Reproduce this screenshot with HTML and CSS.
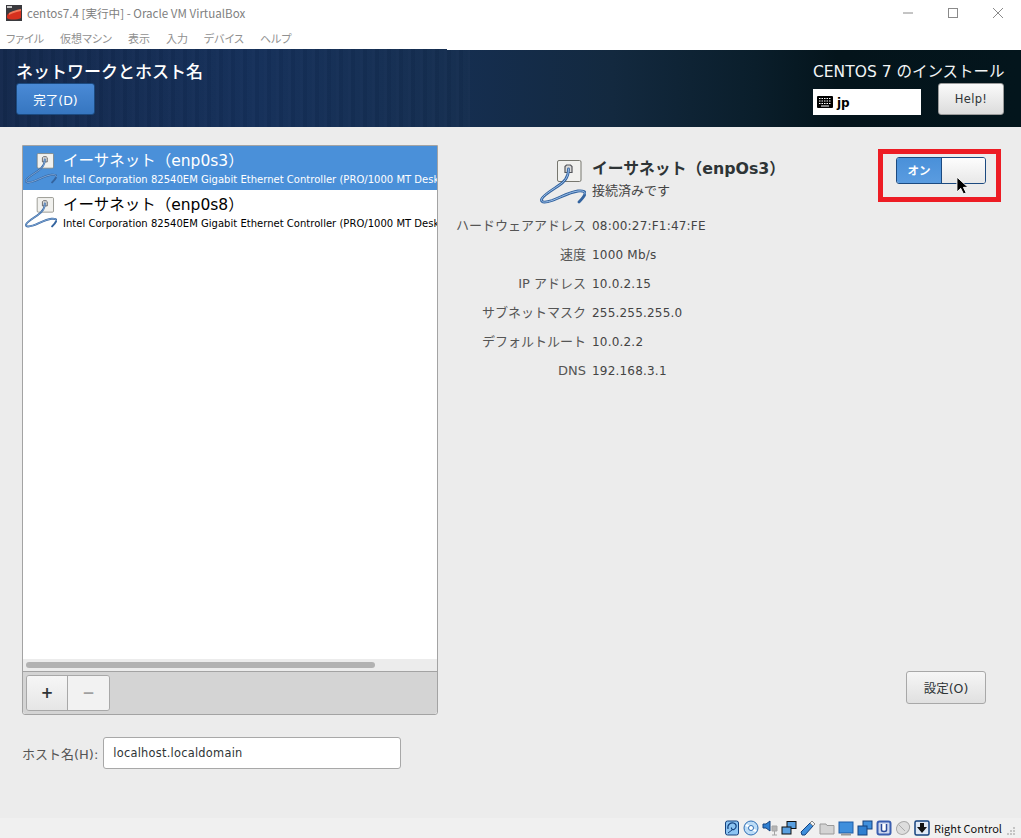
FILE: index.html
```html
<!DOCTYPE html>
<html lang="ja">
<head>
<meta charset="utf-8">
<title>centos7.4 [実行中] - Oracle VM VirtualBox</title>
<link rel="stylesheet" href="styles.css">
</head>
<body>
<svg class="defs" width="0" height="0" aria-hidden="true">
  <defs>
    <symbol id="nic" viewBox="0 0 46 44">
      <rect x="17.500" y="0.500" width="23.500" height="21" rx="1.500" fill="#f1f1ee" stroke="#77776f"/>
      <path d="M25 12.500V6.500L26.500 5H30.500L32 6.500V12.500Z" fill="#dcdcda" stroke="#55565a" stroke-width="1.200"/>
      <path d="M28.500 9C28.500 18 24 22 18 26C12 30 2 36 1.500 39.500C1 43 6 42.500 12 40.500C20 37.500 30 32 38 31C44 30.500 45.500 32 45 34C44 37 41 40 39 42" fill="none" stroke="#34649f" stroke-width="2.800" stroke-linecap="round"/>
      <path d="M28.500 9C28.500 18 24 22 18 26C12 30 2 36 1.500 39.500C1 43 6 42.500 12 40.500C20 37.500 30 32 38 31C44 30.500 45.500 32 45 34" fill="none" stroke="#9dc0ea" stroke-width="1" stroke-linecap="round"/>
    </symbol>
  </defs>
</svg>
<div class="titlebar">
  <svg class="appicon" viewBox="0 0 16 16"><rect width="16" height="16" fill="#3a3a3e"/><rect x="1" y="1" width="5" height="2" fill="#c8c8c8"/><path d="M1 11C1 8 7 6 12 6L15 5V13C11 15 3 15 1 13Z" fill="#d6301e"/><path d="M3 8C6 6 10 5 15 4V6C10 7 6 8 3 10Z" fill="#f0785a"/></svg>
  <span class="wintitle">centos7.4 [実行中] - Oracle VM VirtualBox</span>
  <div class="winctrls">
    <svg class="winbtn" viewBox="0 0 12 12"><path d="M1 6H11" stroke="#8a8a8a" fill="none"/></svg>
    <svg class="winbtn" viewBox="0 0 12 12"><rect x="1.500" y="1.500" width="9" height="9" stroke="#8a8a8a" fill="none"/></svg>
    <svg class="winbtn" viewBox="0 0 12 12"><path d="M1 1L11 11M11 1L1 11" stroke="#8a8a8a" fill="none"/></svg>
  </div>
</div>
<nav class="menubar">
  <span>ファイル</span><span>仮想マシン</span><span>表示</span><span>入力</span><span>デバイス</span><span>ヘルプ</span>
</nav>
<header class="header">
  <div class="header-left">
    <h1 class="spoke-title">ネットワークとホスト名</h1>
    <button class="done-btn">完了(D)</button>
  </div>
  <div class="header-right">
    <div class="distro">CENTOS 7 のインストール</div>
    <div class="header-tools">
      <div class="kbd">
        <svg class="kbd-icon" viewBox="0 0 16 12"><rect width="16" height="12" rx="1" fill="#000"/><path d="M2 2.500H14M2 5H14M2 7.500H14" stroke="#fff" stroke-dasharray="1.500 1"/><path d="M4 10H12" stroke="#fff"/></svg>
        <span>jp</span>
      </div>
      <button class="help-btn">Help!</button>
    </div>
  </div>
</header>
<main class="main">
  <section class="left">
    <div class="listbox">
      <div class="devices">
        <div class="device selected">
          <svg class="device-icon"><use href="#nic"/></svg>
          <div class="device-text">
            <div class="device-name">イーサネット（enp0s3）</div>
            <div class="device-desc">Intel Corporation 82540EM Gigabit Ethernet Controller (PRO/1000 MT Desk</div>
          </div>
        </div>
        <div class="device">
          <svg class="device-icon"><use href="#nic"/></svg>
          <div class="device-text">
            <div class="device-name">イーサネット（enp0s8）</div>
            <div class="device-desc">Intel Corporation 82540EM Gigabit Ethernet Controller (PRO/1000 MT Desk</div>
          </div>
        </div>
      </div>
      <div class="scrollbar"><div class="thumb"></div></div>
      <div class="toolbar">
        <div class="btn-group">
          <button class="tool plus">+</button>
          <button class="tool minus">−</button>
        </div>
      </div>
    </div>
    <div class="hostrow">
      <label class="hostlabel">ホスト名(H):</label>
      <div class="hostinput">localhost.localdomain</div>
    </div>
  </section>
  <section class="right">
    <div class="right-top">
      <div class="summary">
        <svg class="summary-icon"><use href="#nic"/></svg>
        <div>
          <div class="summary-name">イーサネット（enpOs3）</div>
          <div class="summary-status">接続済みです</div>
        </div>
      </div>
      <div class="toggle">
        <div class="toggle-on">オン</div>
        <div class="toggle-knob"></div>
      </div>
    </div>
    <dl class="details">
      <dt>ハードウェアアドレス</dt><dd>08:00:27:F1:47:FE</dd>
      <dt>速度</dt><dd>1000 Mb/s</dd>
      <dt>IP アドレス</dt><dd>10.0.2.15</dd>
      <dt>サブネットマスク</dt><dd>255.255.255.0</dd>
      <dt>デフォルトルート</dt><dd>10.0.2.2</dd>
      <dt>DNS</dt><dd>192.168.3.1</dd>
    </dl>
    <div class="right-bottom"><button class="config-btn">設定(O)</button></div>
  </section>
</main>
<footer class="statusbar">
  <svg class="st" viewBox="0 0 16 16"><rect x="1.500" y="1" width="13" height="14" rx="2" fill="#8cc4f2" stroke="#14427f"/><path d="M4 9C3 4 7 2.500 9.500 3C13 4 13 8 10 9.500C8.500 10 7 9 7.500 7.500" fill="none" stroke="#14427f" stroke-width="1.200"/><path d="M4 13L8 10" stroke="#14427f"/></svg>
  <svg class="st" viewBox="0 0 16 16"><circle cx="8" cy="8" r="7" fill="#bcdcf6" stroke="#2f6fb5"/><path d="M3 5L7 7M9 9L13 11" stroke="#fff" stroke-width="2"/><circle cx="8" cy="8" r="2.500" fill="#fff" stroke="#2f6fb5"/></svg>
  <svg class="st" viewBox="0 0 16 16"><path d="M1 4H4L8 1V11L4 8H1Z" fill="#2f7fd0" stroke="#14427f"/><path d="M10 6H15V11H10ZM12.500 11V15M10 15H15" fill="#b5b5b5" stroke="#a5a5a5"/></svg>
  <svg class="st" viewBox="0 0 16 16"><rect x="6" y="1.500" width="9" height="7" fill="#5aa0e0" stroke="#111"/><rect x="1" y="7" width="9" height="7" fill="#5aa0e0" stroke="#111"/></svg>
  <svg class="st" viewBox="0 0 16 16"><path d="M1 12L10 3L13 6L5 15H2Z" fill="#3f8fdc" stroke="#14427f"/><path d="M10 3L12 1L15 4L13 6Z" fill="#f2f2f2" stroke="#888"/></svg>
  <svg class="st" viewBox="0 0 16 16"><path d="M1 4H7L8 5.500H15V14H1Z" fill="#d4d4d4" stroke="#9a9a9a"/></svg>
  <svg class="st" viewBox="0 0 16 16"><rect x="1" y="2" width="14" height="11" fill="#3f8fdc" stroke="#1c5ca8"/><path d="M3 14.500H13" stroke="#999" stroke-width="2"/></svg>
  <svg class="st" viewBox="0 0 16 16"><rect x="6" y="1" width="9" height="8" fill="#3f8fdc" stroke="#14427f"/><rect x="1" y="6" width="9" height="9" fill="#2f7fd0" stroke="#14427f"/></svg>
  <svg class="st" viewBox="0 0 16 16"><rect x="1.500" y="1.500" width="13" height="13" rx="2" fill="#cfd8ee" stroke="#3b5fb0" stroke-width="2"/><path d="M5.500 4V10C5.500 12 10.500 12 10.500 10V4" fill="#fff" stroke="#2a4a9a" stroke-width="1.500"/></svg>
  <svg class="st" viewBox="0 0 16 16"><ellipse cx="8" cy="8" rx="7" ry="6" transform="rotate(-40 8 8)" fill="#ddd" stroke="#aaa"/><path d="M4 5L10 11" stroke="#aaa"/></svg>
  <svg class="st" viewBox="0 0 16 16"><rect x="1" y="1" width="14" height="14" rx="1.500" fill="#dfe8f5" stroke="#14427f" stroke-width="1.500"/><path d="M6 3H10V7H13L8 13L3 7H6Z" fill="#111"/></svg>
  <span class="hostkey">Right Control</span>
  <svg class="grip" viewBox="0 0 10 10"><path d="M7 1h2v2H7zM4 4h2v2H4zM7 4h2v2H7zM1 7h2v2H1zM4 7h2v2H4zM7 7h2v2H7z" fill="#c4c4c4"/></svg>
</footer>
<div class="annot"></div>
<svg class="cursor" viewBox="0 0 14 20"><path d="M1 1V17L5 13L8 19L11 18L8 12H13Z" fill="#000" stroke="#fff"/></svg>
</body>
</html>
```
FILE: styles.css
```css
* { box-sizing: border-box; }
html, body { height: 100%; }
body {
  margin: 0;
  height: 838px;
  overflow: hidden;
  display: flex;
  flex-direction: column;
  background: #ececec;
  color: #2e3436;
  font-family: "DejaVu Sans", "Noto Sans CJK JP", sans-serif;
  font-size: 13px;
}
button { font-family: inherit; padding: 0; }
.defs { position: absolute; }

.titlebar {
  height: 26px;
  flex: none;
  display: flex;
  align-items: center;
  background: #fff;
  padding-left: 6px;
  font-family: "Noto Sans CJK JP", sans-serif;
  color: #808080;
  font-size: 11.600px;
}
.appicon { width: 16px; height: 16px; margin-right: 5px; }
.wintitle { flex: 1; }
.winctrls { display: flex; gap: 33px; padding-right: 17px; }
.winbtn { width: 12px; height: 12px; display: block; }

.menubar {
  height: 23px;
  flex: none;
  background: #fff;
  display: flex;
  gap: 16px;
  align-items: center;
  padding: 1px 0 0 6px;
  font-family: "Noto Sans CJK JP", sans-serif;
  font-feature-settings: "palt";
  font-size: 11px;
  color: #909090;
}

.header {
  height: 78px;
  flex: none;
  position: relative;
  display: flex;
  justify-content: space-between;
  padding: 12px 17px 0 16px;
  color: #fff;
  background-color: #03151c;
  background-image:
    repeating-linear-gradient(90deg, rgba(255,255,255,.016) 0 3px, rgba(0,0,0,.035) 3px 7px, rgba(255,255,255,.008) 7px 12px),
    linear-gradient(90deg, #14294d 0%, #15305a 25%, #152e50 45%, #13293f 60%, #0a1e2b 74%, #04141b 82%, #03151c 100%);
  background-size: 470px 100%, 100% 100%;
  background-repeat: no-repeat;
}
.header::before {
  content: "";
  position: absolute;
  left: 447px;
  right: 0;
  top: 0;
  height: 1px;
  background: #fff;
}
.spoke-title { margin: 0; font-size: 17px; font-weight: 500; line-height: 22px; }
.done-btn {
  display: block;
  width: 79px;
  height: 32px;
  border: 1px solid #1c4a80;
  border-radius: 3px;
  color: #fff;
  font-size: 12.500px;
  background: linear-gradient(#4a8ad6, #3676c0);
}
.header-right { width: 191px; display: flex; flex-direction: column; }
.distro { font-size: 15.500px; line-height: 22px; text-align: right; color: #f2f4f5; white-space: nowrap; }
.header-tools { display: flex; justify-content: space-between; align-items: flex-start; }
.kbd {
  width: 108px;
  height: 26px;
  margin-top: 6px;
  background: #fff;
  color: #000;
  display: flex;
  align-items: center;
  padding-left: 4px;
  gap: 4px;
  font-weight: 700;
  font-size: 12px;
}
.kbd-icon { width: 16px; height: 12px; }
.kbd span { padding-top: 2px; }
.help-btn {
  width: 66px;
  height: 32px;
  border: 1px solid #9b9b9b;
  border-radius: 3px;
  background: linear-gradient(#fafafa, #dcdcdc);
  color: #2e3436;
  font-size: 11.500px;
  letter-spacing: .3px;
}

.main {
  flex: 1;
  min-height: 0;
  display: flex;
  padding: 18px 35px 0 22px;
  gap: 18px;
}
.left { width: 416px; flex: none; display: flex; flex-direction: column; }
.listbox {
  height: 570px;
  display: flex;
  flex-direction: column;
  border: 1px solid #a3a3a3;
  border-radius: 0 0 3px 3px;
  background: #fff;
}
.devices { flex: 1; min-height: 0; overflow: hidden; }
.device {
  height: 44px;
  display: flex;
  align-items: flex-start;
  gap: 6px;
  padding: 5px 0 0 2px;
  color: #000;
  white-space: nowrap;
}
.device.selected { background: #4a90d9; color: #fff; }
.device-icon { width: 32px; height: 31px; flex: none; margin-top: 2px; }
.device-text { flex: 1; min-width: 0; overflow: hidden; }
.device-name { font-size: 15.500px; line-height: 20px; }
.device-desc { font-size: 10px; line-height: 15px; margin-top: 1px; letter-spacing: .02px; }
.scrollbar {
  height: 13px;
  flex: none;
  background: #ececec;
  border-bottom: 1px solid #a3a3a3;
  padding: 3px 62px 0 3px;
}
.thumb { height: 6px; border-radius: 3px; background: #b2b2b2; }
.toolbar {
  height: 42px;
  flex: none;
  background: #d4d4d4;
  padding: 3px;
  border-radius: 0 0 3px 3px;
}
.btn-group {
  display: flex;
  width: 84px;
  height: 36px;
  border: 1px solid #a8a8a8;
  border-radius: 3px;
  overflow: hidden;
}
.tool { border: 0; font-size: 15px; font-weight: 700; background: linear-gradient(#f6f6f6, #e6e6e6); color: #2e3436; }
.tool.plus { width: 40px; }
.tool.minus { flex: 1; border-left: 1px solid #a8a8a8; background: #f2f2f2; color: #a0a0a0; }
.hostrow { display: flex; align-items: center; gap: 5px; margin-top: 22px; }
.hostlabel { color: #555; font-size: 13px; white-space: nowrap; }
.hostinput {
  width: 298px;
  height: 32px;
  border: 1px solid #a8a8a8;
  border-radius: 3px;
  background: #fff;
  padding: 0 9px;
  display: flex;
  align-items: center;
  color: #2e3436;
  font-size: 11.400px;
  letter-spacing: .25px;
}

.right { flex: 1; min-width: 0; display: flex; flex-direction: column; }
.right-top { display: flex; justify-content: space-between; height: 60px; }
.summary { display: flex; margin: 14px 0 0 84px; gap: 6px; }
.summary-icon { width: 46px; height: 44px; flex: none; margin-top: 1px; }
.summary-name { font-size: 15.800px; font-weight: 700; line-height: 19px; }
.summary-status { font-size: 13px; line-height: 18px; margin-top: 4px; color: #444; }
.toggle {
  width: 90px;
  height: 27px;
  margin-top: 12px;
  display: flex;
  border: 1px solid #1c4a80;
  border-radius: 3px;
  overflow: hidden;
  font-size: 11.500px;
  font-weight: 700;
  color: #fff;
}
.toggle-on { width: 45px; background: linear-gradient(#4a90d9, #5a9ce0); display: flex; align-items: center; justify-content: center; padding-bottom: 2px; border-right: 1px solid #1c4a80; }
.toggle-knob { flex: 1; background: linear-gradient(#fdfdfd, #e8e8e8); }
.details {
  margin: 11px 0 0;
  display: grid;
  grid-template-columns: 130px auto;
  grid-auto-rows: 29px;
  column-gap: 6px;
  justify-content: start;
  align-items: baseline;
  line-height: 20px;
}
.details dt { text-align: right; color: #555; white-space: nowrap; font-size: 13px; }
.details dd { margin: 0; color: #444; white-space: nowrap; font-size: 12px; letter-spacing: .2px; }
.right-bottom { flex: 1; display: flex; justify-content: flex-end; align-items: flex-start; padding-top: 281px; }
.config-btn {
  width: 80px;
  height: 33px;
  border: 1px solid #a8a8a8;
  border-radius: 3px;
  background: linear-gradient(#f6f6f6, #e0e0e0);
  color: #2e3436;
  font-size: 12.500px;
}

.statusbar {
  height: 20px;
  flex: none;
  display: flex;
  align-items: center;
  justify-content: flex-end;
  gap: 1px;
  padding-right: 5px;
  background: #f0f0f0;
}
.st { width: 16px; height: 16px; flex: none; margin-right: 2px; }
.hostkey { font-family: "Noto Sans CJK JP", sans-serif; font-size: 11px; color: #111; margin-left: 1px; }
.grip { width: 10px; height: 10px; margin: 6px 0 0 3px; }

.annot {
  position: absolute;
  left: 878px;
  top: 149px;
  width: 123px;
  height: 53px;
  border: 5px solid #ed1c24;
}
.cursor { position: absolute; left: 956px; top: 176px; width: 13px; height: 19px; }
```
